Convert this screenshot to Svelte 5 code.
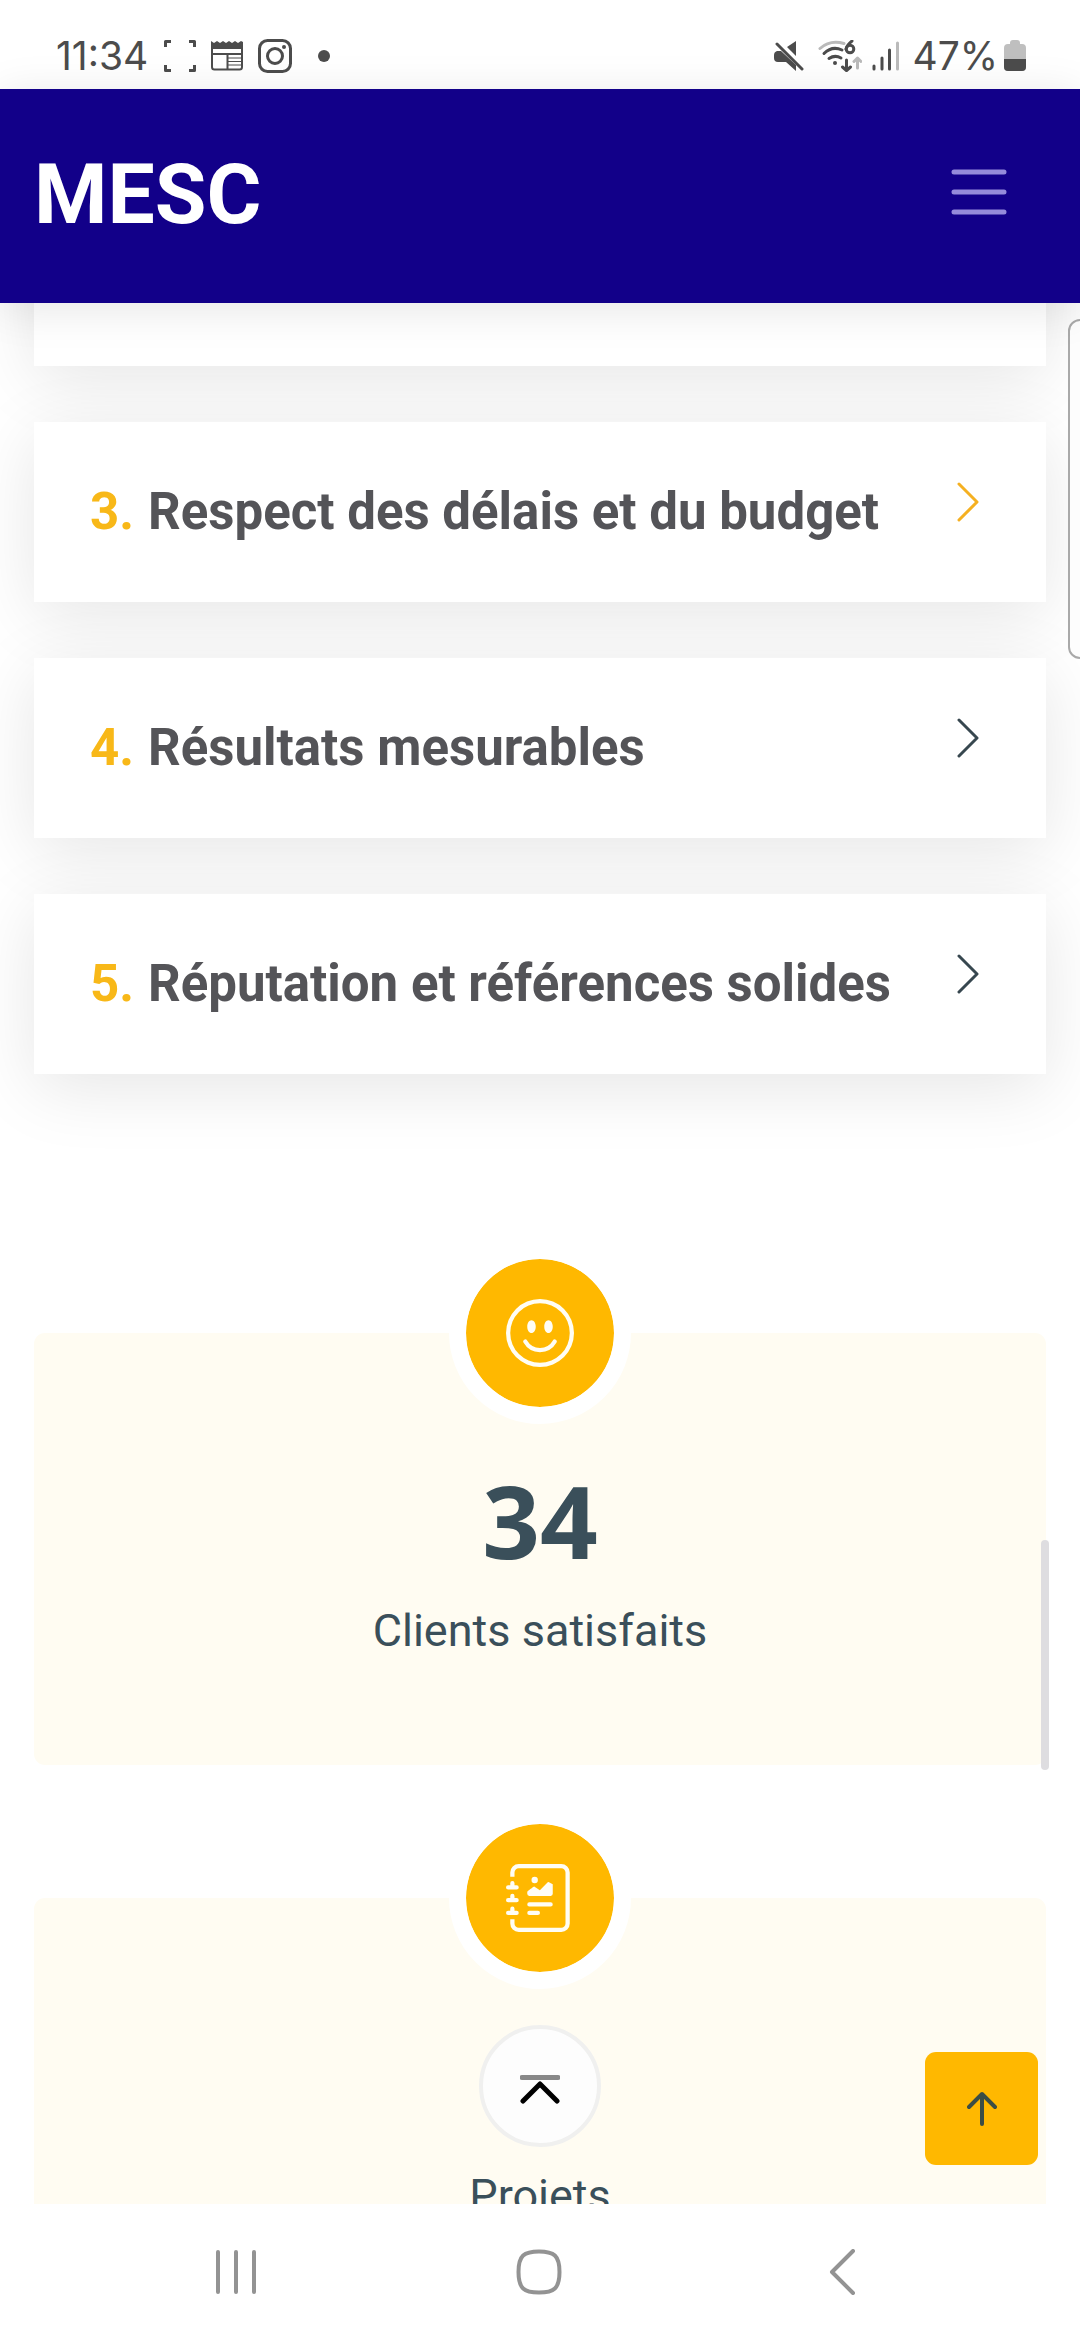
<script lang="ts">
  type Reason = { number: number; label: string; active: boolean };
  type Counter = { icon: 'smile' | 'journal'; value: string; label: string };

  const reasons: Reason[] = [
    { number: 3, label: 'Respect des délais et du budget', active: true },
    { number: 4, label: 'Résultats mesurables', active: false },
    { number: 5, label: 'Réputation et références solides', active: false }
  ];

  const counters: Counter[] = [
    { icon: 'smile', value: '34', label: 'Clients satisfaits' },
    { icon: 'journal', value: '', label: 'Projets' }
  ];
</script>

<div class="phone">
  <div class="status">
    <span class="clock">11:34</span>
    <svg class="capture" width="32" height="32" viewBox="0 0 32 32">
      <path d="M1.5 7V1.5H7M25 1.5h5.500V7M30.500 25v5.500H25M7 30.500H1.500V25" />
    </svg>
    <svg class="news" width="34" height="32" viewBox="0 0 34 32">
      <path class="fill" d="M1 1l3 2 3-2 3 2 3-2 3 2 3-2 3 2 3-2 3 2 3-2 2 1v7H1z" />
      <path class="thin" d="M2 7v20q0 2.500 2.500 2.500h25q2.500 0 2.500-2.500V7M2 14h30M17.500 14v15" />
      <path class="hair" d="M18 18h14M18 21.500h14M18 25h14" />
    </svg>
    <svg class="camera" width="34" height="34" viewBox="0 0 34 34">
      <rect x="1.500" y="1.500" width="31" height="31" rx="8" />
      <circle cx="17" cy="17" r="7.500" />
      <circle class="fill" cx="26" cy="8" r="2" />
    </svg>
    <span class="dot"></span>

    <svg class="mute" width="30" height="30" viewBox="0 0 30 30">
      <path class="fill" d="M22 0v15L13 6zM3 10h4l15 14v6l-10-9H4q-4 0-4-4v-3q0-3 3-4z" />
      <path d="M3 3l25 25" />
    </svg>
    <svg class="wifi" width="44" height="32" viewBox="0 0 44 32">
      <path class="faint" d="M2 8.500Q12 -0.500 26 3.500" />
      <path d="M6 13.500Q14 5.500 24 10M11 18.500q6-4 12-0.500" />
      <circle class="fill" cx="17" cy="23" r="2" />
      <path d="M34 1q-5 4-6 8" />
      <circle cx="32" cy="9" r="3.800" />
      <path d="M28.500 20v10M24.500 27l4 3.500 4-3.500" />
      <path class="faint" d="M39.500 28V18M36 21.500l3.500-3.500 3.500 3.500" />
    </svg>
    <svg class="signal" width="28" height="30" viewBox="0 0 28 30">
      <path d="M2 25v3M10 17v11M17.500 9v19" />
      <path class="faint" d="M25.500 2v26" />
    </svg>
    <span class="percent">47%</span>
    <svg class="battery" width="22" height="32" viewBox="0 0 22 32">
      <path class="shell" d="M6 3q0-3 3-3h4q3 0 3 3v1h2q4 0 4 4v19q0 4-4 4H4q-4 0-4-4V8q0-4 4-4h2z" />
      <path class="level" d="M0 19h22v8q0 4-4 4H4q-4 0-4-4z" />
    </svg>
  </div>

  <header>
    <a class="brand" href="#accueil">MESC</a>
    <button class="toggler" aria-label="Menu">
      <svg width="56" height="46" viewBox="0 0 56 46">
        <path d="M3 3h50M3 23h50M3 43h50" />
      </svg>
    </button>
  </header>

  <main>
    <section class="reasons">
      <div class="reason"></div>
      {#each reasons as reason}
        <a class="reason" class:active={reason.active} href="#raison-{reason.number}">
          <span class="number">{reason.number}.</span>
          <span class="label">{reason.label}</span>
          <svg width="24" height="40" viewBox="0 0 24 40">
            <path d="M3 2l18 18L3 38" />
          </svg>
        </a>
      {/each}
    </section>

    <section class="counters">
      {#each counters as counter}
        <div class="counter">
          <div class="badge">
            <svg width="68" height="68" viewBox="0 0 16 16">
              {#if counter.icon === 'smile'}
                <path d="M8 15A7 7 0 1 1 8 1a7 7 0 0 1 0 14m0 1A8 8 0 1 0 8 0a8 8 0 0 0 0 16" />
                <path d="M4.285 9.567a.5.5 0 0 1 .683.183A3.500 3.500 0 0 0 8 11.500a3.500 3.500 0 0 0 3.032-1.750.5.5 0 1 1 .866.5A4.500 4.500 0 0 1 8 12.500a4.500 4.500 0 0 1-3.898-2.250.5.5 0 0 1 .183-.683M7 6.500C7 7.328 6.552 8 6 8s-1-.672-1-1.500S5.448 5 6 5s1 .672 1 1.500m4 0c0 .828-.448 1.500-1 1.500s-1-.672-1-1.500S9.448 5 10 5s1 .672 1 1.500" />
              {:else}
                <path d="M7.500 3.750a.75.75 0 1 1-1.500 0 .75.75 0 0 1 1.500 0m-.861 1.542 1.330.886 1.854-1.855a.25.25 0 0 1 .289-.047L11 4.750V7a.5.5 0 0 1-.5.5h-5A.5.5 0 0 1 5 7v-.5s1.540-1.274 1.639-1.208M5 9.500a.5.5 0 0 1 .5-.5h5a.5.5 0 0 1 0 1h-5a.5.5 0 0 1-.5-.5m0 2a.5.5 0 0 1 .5-.5h2a.5.5 0 0 1 0 1h-2a.5.5 0 0 1-.5-.5" />
                <path d="M3 0h10a2 2 0 0 1 2 2v12a2 2 0 0 1-2 2H3a2 2 0 0 1-2-2v-1h1v1a1 1 0 0 0 1 1h10a1 1 0 0 0 1-1V2a1 1 0 0 0-1-1H3a1 1 0 0 0-1 1v1H1V2a2 2 0 0 1 2-2" />
                <path d="M1 5v-.5a.5.5 0 0 1 1 0V5h.5a.5.5 0 0 1 0 1h-2a.5.5 0 0 1 0-1zm0 3v-.5a.5.5 0 0 1 1 0V8h.5a.5.5 0 0 1 0 1h-2a.5.5 0 0 1 0-1zm0 3v-.5a.5.5 0 0 1 1 0v.5h.5a.5.5 0 0 1 0 1h-2a.5.5 0 0 1 0-1z" />
              {/if}
            </svg>
          </div>
          <div class="value">{counter.value}</div>
          <p>{counter.label}</p>
        </div>
      {/each}
    </section>

    <div class="edge-panel"></div>
    <div class="scrollbar"></div>

    <button class="go-top" aria-label="Haut de page">
      <svg width="40" height="30" viewBox="0 0 40 30">
        <path class="bar" d="M2 2.500h36" />
        <path d="M3 26L20 9l17 17" />
      </svg>
    </button>
    <a class="back-to-top" href="#accueil" aria-label="Retour en haut">
      <svg width="30" height="36" viewBox="0 0 30 36">
        <path d="M15 33V3M2 16L15 3l13 13" />
      </svg>
    </a>
  </main>

  <nav>
    <button aria-label="Applications récentes">
      <svg width="42" height="44" viewBox="0 0 42 44">
        <path d="M3 2v40M21 2v40M39 2v40" />
      </svg>
    </button>
    <button aria-label="Accueil">
      <svg width="46" height="46" viewBox="0 0 46 46">
        <path d="M23 2.500c15 0 20.500 4 20.500 20.500S38 43.500 23 43.500 2.500 39.500 2.500 23 8 2.500 23 2.500z" />
      </svg>
    </button>
    <button aria-label="Retour">
      <svg width="28" height="46" viewBox="0 0 28 46">
        <path d="M25 2L4 23l21 21" />
      </svg>
    </button>
  </nav>
</div>

<style>
  :global(body) {
    margin: 0;
    background: #fff;
  }

  .phone {
    display: flex;
    flex-direction: column;
    height: 100vh;
    overflow: hidden;
    background: #fff;
    font-family: Roboto, sans-serif;
  }

  svg {
    display: block;
    flex: none;
    fill: none;
    stroke-linecap: round;
    stroke-linejoin: round;
  }

  button {
    padding: 0;
    border: 0;
    background: none;
  }

  a {
    text-decoration: none;
  }

  /* system status bar */
  .status {
    display: flex;
    align-items: center;
    flex: none;
    box-sizing: border-box;
    height: 89px;
    padding: 22px 54px 0 56px;
    color: #4c4c4c;
    font-family: Inter, sans-serif;
    font-size: 39px;
  }

  .status svg {
    stroke: #4c4c4c;
    stroke-width: 3;
  }

  .status .fill {
    fill: #4c4c4c;
    stroke: none;
  }

  .status .thin {
    stroke-width: 2;
  }

  .status .hair {
    stroke-width: 1;
  }

  .status .faint {
    stroke: #bababa;
  }

  .capture {
    margin-left: 16px;
    stroke-linecap: butt;
  }

  .news,
  .camera {
    margin-left: 14px;
  }

  .dot {
    width: 12px;
    height: 12px;
    margin-left: 26px;
    border-radius: 50%;
    background: #4c4c4c;
  }

  .mute {
    margin-left: auto;
  }

  .wifi {
    margin-left: 14px;
  }

  .signal {
    margin-left: 10px;
  }

  .percent {
    margin-left: 12px;
  }

  .battery {
    margin-left: 6px;
  }

  .status .shell {
    fill: #bfbfbf;
    stroke: none;
  }

  .status .level {
    fill: #4c4c4c;
    stroke: none;
  }

  /* site header */
  header {
    position: relative;
    z-index: 2;
    display: flex;
    align-items: center;
    justify-content: space-between;
    flex: none;
    box-sizing: border-box;
    height: 214px;
    padding: 0 73px 0 34px;
    background: #120089;
    box-shadow: 0 6px 42px rgba(0, 0, 0, 0.1);
  }

  .brand {
    margin-bottom: 2px;
    color: #fff;
    font-size: 84px;
    font-weight: 700;
    line-height: 100px;
  }

  .toggler {
    margin-bottom: 8px;
  }

  .toggler svg {
    stroke: #958bdb;
    stroke-width: 5;
  }

  /* page body */
  main {
    position: relative;
    flex: 1;
    min-height: 0;
    overflow: hidden;
  }

  .reasons {
    display: flex;
    flex-direction: column;
    gap: 56px;
    margin-top: -117px;
    padding: 0 34px;
  }

  .reason {
    display: flex;
    align-items: center;
    box-sizing: border-box;
    height: 180px;
    padding: 0 66px 0 56px;
    background: #fff;
    box-shadow: 0 14px 70px rgba(0, 0, 0, 0.1);
    color: #545458;
    font-size: 51px;
    font-weight: 700;
    line-height: 60px;
  }

  .number {
    margin-right: 14px;
    color: #f8b818;
  }

  .reason svg {
    margin: 0 0 20px auto;
    stroke: #37474f;
    stroke-width: 3;
  }

  .reason.active svg {
    stroke: #f5b021;
  }

  .counters {
    display: flex;
    flex-direction: column;
    gap: 133px;
    padding: 259px 34px 0;
  }

  .counter {
    display: flex;
    flex-direction: column;
    align-items: center;
    box-sizing: border-box;
    height: 432px;
    border-radius: 11px;
    background: #fffcf2;
    color: #3a4f5a;
  }

  .badge {
    display: flex;
    align-items: center;
    justify-content: center;
    flex: none;
    width: 148px;
    height: 148px;
    margin-top: -91px;
    border: 17px solid #fff;
    border-radius: 50%;
    background: #ffb800;
    background-clip: padding-box;
  }

  .badge svg {
    fill: #fffdf5;
  }

  .value {
    height: 101px;
    margin-top: 46px;
    font-family: 'Open Sans', sans-serif;
    font-size: 101px;
    font-weight: 700;
    line-height: 101px;
  }

  .counter p {
    margin: 32px 0 0;
    font-size: 45px;
    line-height: 56px;
  }

  /* floating controls */
  .edge-panel {
    position: absolute;
    top: 16px;
    right: -12px;
    box-sizing: border-box;
    width: 24px;
    height: 340px;
    border: 2px solid #a9a9a9;
    border-radius: 12px;
    background: #fdfdfd;
  }

  .scrollbar {
    position: absolute;
    top: 1237px;
    right: 31px;
    width: 8px;
    height: 230px;
    border-radius: 4px;
    background: #dedde0;
  }

  .go-top {
    position: absolute;
    bottom: 57px;
    left: 50%;
    display: flex;
    align-items: center;
    justify-content: center;
    box-sizing: border-box;
    width: 122px;
    height: 122px;
    margin-left: -61px;
    padding-top: 8px;
    border: 4px solid #f0f0ef;
    border-radius: 50%;
    background: #fdfdfd;
  }

  .go-top svg {
    stroke: #000;
    stroke-width: 5;
  }

  .go-top .bar {
    stroke: #888;
  }

  .back-to-top {
    position: absolute;
    right: 42px;
    bottom: 39px;
    display: flex;
    align-items: center;
    justify-content: center;
    width: 113px;
    height: 113px;
    border-radius: 11px;
    background: #ffb800;
  }

  .back-to-top svg {
    stroke: #3b4d45;
    stroke-width: 4;
  }

  /* system navigation */
  nav {
    display: flex;
    align-items: center;
    justify-content: space-between;
    flex: none;
    height: 136px;
    padding: 0 208px 0 206px;
    background: #fff;
  }

  nav button {
    display: flex;
    align-items: center;
    justify-content: center;
    width: 60px;
    height: 60px;
  }

  nav svg {
    stroke: #939393;
    stroke-width: 4;
  }
</style>
